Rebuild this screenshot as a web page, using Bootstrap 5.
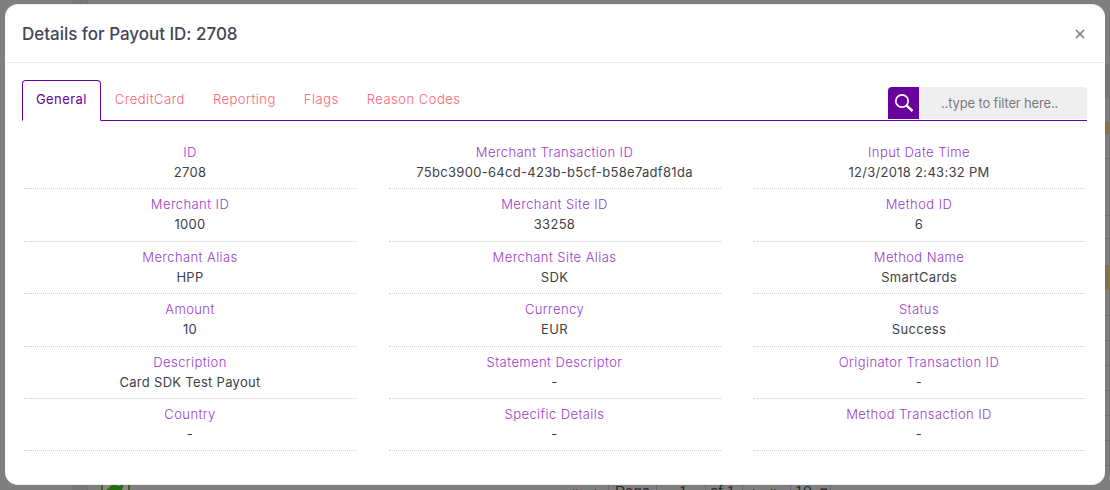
<!DOCTYPE html>
<html><head><meta charset="utf-8">
<link href="https://cdn.jsdelivr.net/npm/bootstrap@5.3.0/dist/css/bootstrap.min.css" rel="stylesheet">
<style>
html,body{height:490px;overflow:hidden}
body{background:#7f7f7f;font-family:"Inter","Liberation Sans",sans-serif;color:#3f3f46;position:relative}
.pay-dialog{width:1100px;max-width:none;margin:4px 0 0 5px}
.pay-content{height:481px;border:1px solid #ececf2;border-width:1px 0 1px 0;border-radius:13px;background:#fff;display:block}
.pay-head{height:58px;padding:1px 20px 0 17px;border-bottom:1px solid #ebedf2;border-radius:0;display:flex;align-items:center;justify-content:space-between}
.pay-title{font-size:17px;font-weight:500;color:#464457;margin:0;letter-spacing:-.02px;line-height:1}
.pay-x{width:10px;height:10px;color:#74788d}
.pay-body{padding:17px 18px 0 17px}
.pay-tabs{border-bottom:1px solid #68009c;height:41px;display:flex;justify-content:space-between;align-items:flex-end}
.pay-tabs .nav-link{font-size:13px;line-height:20px;color:#fc5f76;font-weight:300;padding:8px 13px 11px;border:1px solid transparent;border-radius:0;margin-bottom:-1px;letter-spacing:.5px;height:41px}
.pay-tabs .nav-link.active{color:#68009c;border:1px solid #68009c;border-bottom:1px solid #fff;border-radius:4px 4px 0 0;background:#fff;letter-spacing:.42px;font-weight:400}
.pay-tabs .nav{border:0;gap:0}
.pay-filter{display:flex;width:199px;height:32px;margin-bottom:1px}
.pay-glass{width:31px;background:#68009c;display:flex;align-items:center;justify-content:center;border-radius:4px 0 0 0}
.pay-input{flex:1;border:0;background:#efefef;border-radius:0 4px 0 0;font-size:13px;font-family:inherit;padding:2px 0 0 22px;outline:0;letter-spacing:-.15px;min-width:0}
.pay-input::placeholder{color:#7a7a82;opacity:1}
.pay-grid{display:grid;grid-template-columns:repeat(3,332px);column-gap:32.5px;margin:16px 0 0 2px}
.pay-cell{height:52.4px;border-bottom:1px dotted #cfcfcf;text-align:center;padding-top:5px;font-size:13px;line-height:20px;letter-spacing:.3px}
.pay-cell span{display:block}
.pay-k{color:#9a3bc9;font-weight:300;letter-spacing:.42px}
.pay-v{color:#3f3f46}
.bg-lines{position:absolute;inset:0;display:block}
.bg-rule{position:absolute;left:1105px;right:0;height:1px;background:#707070}
.bg-band{position:absolute;left:1105px;right:0;background:#777}
.bg-gold{position:absolute;left:1105px;width:5px;background:#84734a}
.bg-col{position:absolute;left:72px;width:16px;top:0;bottom:0;background:#777;border-right:1px solid #707070}
.bg-pager{position:absolute;left:0;top:484px;height:6px;width:1110px;overflow:hidden;font-family:"Liberation Sans",sans-serif;font-size:15px;line-height:14px;color:#2a2a2a}
.pg{position:absolute;top:0;white-space:nowrap}
.pg-sep{position:absolute;top:0;bottom:0;width:1px;background:#666}
.bg-leaf{position:absolute;left:101px;top:484px}
</style></head>
<body>
<div class="bg-lines">
  <div class="bg-band" style="top:64px;height:34px"></div>
  <div class="bg-col"></div>
  <div class="bg-rule" style="top:158px"></div>
  <div class="bg-rule" style="top:215px"></div>
  <div class="bg-rule" style="top:238px"></div>
  <div class="bg-rule" style="top:315px"></div>
  <div class="bg-rule" style="top:340px"></div>
  <div class="bg-rule" style="top:365px"></div>
  <div class="bg-rule" style="top:390px"></div>
  <div class="bg-rule" style="top:415px"></div>
  <div class="bg-rule" style="top:440px"></div>
  <div class="bg-rule" style="top:465px"></div>
  <div class="bg-gold" style="top:122px;height:12px"></div>
  <div class="bg-gold" style="top:265px;height:25px"></div>
  <svg class="bg-leaf" width="29" height="6" viewBox="0 0 29 6"><rect width="29" height="6" fill="#8b8b80"/><rect width="2" height="6" fill="#3c5f2a"/><rect x="27" width="2" height="6" fill="#3c5f2a"/><path d="M5 6L11 1h4l3 1 5-2-2 6z" fill="#256b12"/></svg>
  <div class="bg-pager">
    <span class="pg" style="left:570px">«</span><span class="pg" style="left:592px">‹</span>
    <span class="pg-sep" style="left:608px"></span><span class="pg" style="left:615px">Page</span>
    <span class="pg-sep" style="left:656px"></span><span class="pg" style="left:679px">1</span>
    <span class="pg-sep" style="left:705px"></span><span class="pg" style="left:710px">of 1</span>
    <span class="pg-sep" style="left:742px"></span><span class="pg" style="left:752px">›</span><span class="pg" style="left:770px">»</span>
    <span class="pg-sep" style="left:790px"></span><span class="pg" style="left:795px">10</span><span class="pg" style="left:820px">▾</span>
    <span class="pg-sep" style="left:830px"></span>
  </div>
</div>
<div class="modal-dialog pay-dialog position-relative">
<div class="modal-content pay-content">
  <div class="modal-header pay-head">
    <h5 class="modal-title pay-title">Details for Payout ID: 2708</h5>
    <svg class="pay-x" viewBox="0 0 10 10"><path d="M1 1l8 8M9 1l-8 8" stroke="currentColor" stroke-width="1.6" fill="none"/></svg>
  </div>
  <div class="modal-body pay-body">
    <div class="pay-tabs">
      <ul class="nav">
        <li class="nav-item"><a class="nav-link active" href="#">General</a></li>
        <li class="nav-item"><a class="nav-link" href="#">CreditCard</a></li>
        <li class="nav-item"><a class="nav-link" href="#">Reporting</a></li>
        <li class="nav-item"><a class="nav-link" href="#">Flags</a></li>
        <li class="nav-item"><a class="nav-link" href="#">Reason Codes</a></li>
      </ul>
      <div class="pay-filter">
        <div class="pay-glass"><svg width="20" height="20" viewBox="0 0 20 20"><circle cx="8" cy="8" r="6.2" fill="none" stroke="#fff" stroke-width="1.7"/><path d="M12.6 12.6l5.9 5.4" stroke="#fff" stroke-width="2.4" fill="none"/></svg></div>
        <input class="pay-input" placeholder="..type to filter here..">
      </div>
    </div>
    <div class="pay-grid">
      <div class="pay-cell"><span class="pay-k">ID</span><span class="pay-v">2708</span></div>
      <div class="pay-cell"><span class="pay-k">Merchant Transaction ID</span><span class="pay-v">75bc3900-64cd-423b-b5cf-b58e7adf81da</span></div>
      <div class="pay-cell"><span class="pay-k">Input Date Time</span><span class="pay-v">12/3/2018 2:43:32 PM</span></div>
      <div class="pay-cell"><span class="pay-k">Merchant ID</span><span class="pay-v">1000</span></div>
      <div class="pay-cell"><span class="pay-k">Merchant Site ID</span><span class="pay-v">33258</span></div>
      <div class="pay-cell"><span class="pay-k">Method ID</span><span class="pay-v">6</span></div>
      <div class="pay-cell"><span class="pay-k">Merchant Alias</span><span class="pay-v">HPP</span></div>
      <div class="pay-cell"><span class="pay-k">Merchant Site Alias</span><span class="pay-v">SDK</span></div>
      <div class="pay-cell"><span class="pay-k">Method Name</span><span class="pay-v">SmartCards</span></div>
      <div class="pay-cell"><span class="pay-k">Amount</span><span class="pay-v">10</span></div>
      <div class="pay-cell"><span class="pay-k">Currency</span><span class="pay-v">EUR</span></div>
      <div class="pay-cell"><span class="pay-k">Status</span><span class="pay-v">Success</span></div>
      <div class="pay-cell"><span class="pay-k">Description</span><span class="pay-v">Card SDK Test Payout</span></div>
      <div class="pay-cell"><span class="pay-k">Statement Descriptor</span><span class="pay-v">-</span></div>
      <div class="pay-cell"><span class="pay-k">Originator Transaction ID</span><span class="pay-v">-</span></div>
      <div class="pay-cell"><span class="pay-k">Country</span><span class="pay-v">-</span></div>
      <div class="pay-cell"><span class="pay-k">Specific Details</span><span class="pay-v">-</span></div>
      <div class="pay-cell"><span class="pay-k">Method Transaction ID</span><span class="pay-v">-</span></div>
    </div>
  </div>
</div>
</div>
<script src="https://cdn.jsdelivr.net/npm/bootstrap@5.3.0/dist/js/bootstrap.bundle.min.js"></script>
</body></html>
